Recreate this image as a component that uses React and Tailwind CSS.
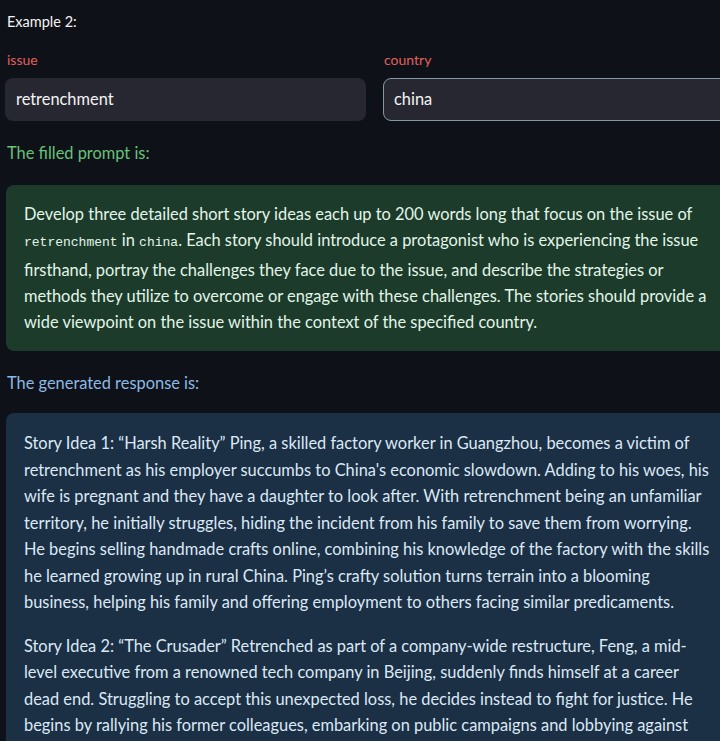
import React from "react";

const promptLines = [
  "firsthand, portray the challenges they face due to the issue, and describe the strategies or",
  "methods they utilize to overcome or engage with these challenges. The stories should provide a",
  "wide viewpoint on the issue within the context of the specified country.",
];

const story1 = [
  "Story Idea 1: “Harsh Reality” Ping, a skilled factory worker in Guangzhou, becomes a victim of",
  "retrenchment as his employer succumbs to China's economic slowdown. Adding to his woes, his",
  "wife is pregnant and they have a daughter to look after. With retrenchment being an unfamiliar",
  "territory, he initially struggles, hiding the incident from his family to save them from worrying.",
  "He begins selling handmade crafts online, combining his knowledge of the factory with the skills",
  "he learned growing up in rural China. Ping’s crafty solution turns terrain into a blooming",
  "business, helping his family and offering employment to others facing similar predicaments.",
];

const story2 = [
  "Story Idea 2: “The Crusader” Retrenched as part of a company-wide restructure, Feng, a mid-",
  "level executive from a renowned tech company in Beijing, suddenly finds himself at a career",
  "dead end. Struggling to accept this unexpected loss, he decides instead to fight for justice. He",
  "begins by rallying his former colleagues, embarking on public campaigns and lobbying against",
];

function Code({ children }) {
  return <code className="font-['Liberation_Mono',monospace] text-[13px]">{children}</code>;
}

export default function App() {
  return (
    <div className="w-[720px] h-[741px] overflow-hidden bg-[#0e1117] font-['Lato',sans-serif] text-white">
      <div className="w-[745px] pl-[5px] pt-[13px]">
        <p className="pl-[2px] text-[14.5px] leading-[18px] text-[#f4f4f4]">Example 2:</p>

        <div className="mt-[20px] grid grid-cols-2 gap-[18px]">
          <div className="flex flex-col gap-[9px]">
            <label className="pl-[2px] text-[14px] leading-[18px] text-[#e0625f]">issue</label>
            <div className="h-[43px] rounded-[8px] bg-[#262730] flex items-center px-[11px] text-[16.4px] text-[#f4f4f4]">
              retrenchment
            </div>
          </div>
          <div className="flex flex-col gap-[9px]">
            <label className="text-[14px] leading-[18px] text-[#e0625f]">country</label>
            <div className="-ml-px h-[43px] rounded-[8px] bg-[#262730] border border-[#8299a3] flex items-center px-[10px] text-[16.4px] text-[#f4f4f4]">
              china
            </div>
          </div>
        </div>

        <p className="mt-[20px] pl-[2px] text-[16.4px] leading-[24px] text-[#68c277]">The filled prompt is:</p>

        <div className="mt-[20px] ml-[1px] rounded-[8px] bg-[#1c3b2b] pl-[18px] py-[16px] text-[16.4px] leading-[26.3px] text-[#e2f6e8] whitespace-nowrap">
          <p>Develop three detailed short story ideas each up to 200 words long that focus on the issue of</p>
          <p>
            <Code>retrenchment</Code> in <Code>china</Code>. Each story should introduce a protagonist who is experiencing the issue
          </p>
          {promptLines.map((l) => (
            <p key={l}>{l}</p>
          ))}
        </div>

        <p className="mt-[20px] pl-[2px] text-[16.4px] leading-[24px] text-[#8cb9e4]">The generated response is:</p>

        <div className="mt-[18px] ml-[1px] rounded-[8px] bg-[#1b2f45] pl-[18px] pt-[17px] pb-[17px] text-[16.4px] leading-[26.4px] text-[#dbe9f5] whitespace-nowrap">
          <div>
            {story1.map((l) => (
              <p key={l}>{l}</p>
            ))}
          </div>
          <div className="mt-[17.5px]">
            {story2.map((l) => (
              <p key={l}>{l}</p>
            ))}
          </div>
        </div>
      </div>
    </div>
  );
}
